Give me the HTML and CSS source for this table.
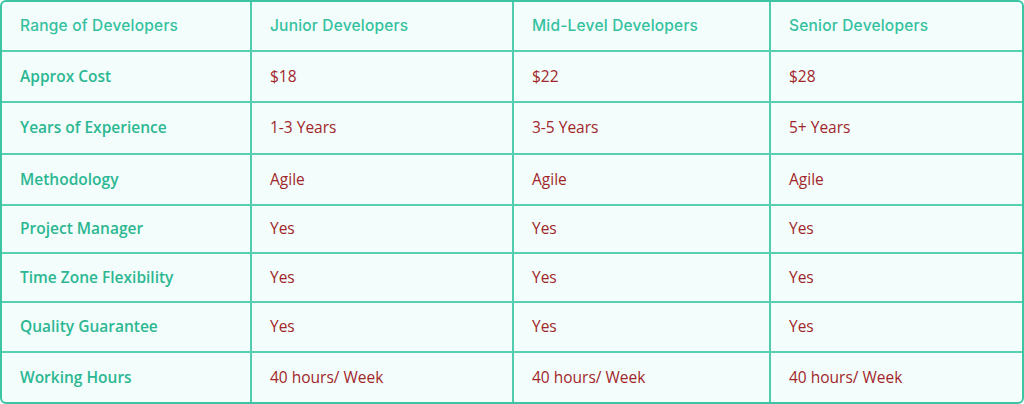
FILE: index.html
```html
<!DOCTYPE html>
<html>
<head>
<meta charset="utf-8">
<link rel="stylesheet" href="styles.css">
</head>
<body>
<div class="wrap">
<table class="grid">
<colgroup><col class="c1"><col class="c2"><col class="c3"><col class="c4"></colgroup>
<thead>
<tr class="r0"><th>Range of Developers</th><th>Junior Developers</th><th>Mid-Level Developers</th><th>Senior Developers</th></tr>
</thead>
<tbody>
<tr class="r1"><td class="lab">Approx Cost</td><td>$18</td><td>$22</td><td>$28</td></tr>
<tr class="r2"><td class="lab">Years of Experience</td><td>1-3 Years</td><td>3-5 Years</td><td>5+ Years</td></tr>
<tr class="r3"><td class="lab">Methodology</td><td>Agile</td><td>Agile</td><td>Agile</td></tr>
<tr class="r4"><td class="lab">Project Manager</td><td>Yes</td><td>Yes</td><td>Yes</td></tr>
<tr class="r5"><td class="lab">Time Zone Flexibility</td><td>Yes</td><td>Yes</td><td>Yes</td></tr>
<tr class="r6"><td class="lab">Quality Guarantee</td><td>Yes</td><td>Yes</td><td>Yes</td></tr>
<tr class="r7"><td class="lab">Working Hours</td><td>40 hours/ Week</td><td>40 hours/ Week</td><td>40 hours/ Week</td></tr>
</tbody>
</table>
</div>
</body>
</html>
```
FILE: styles.css
```css
html, body { margin: 0; padding: 0; background: #ffffff; }
.wrap {
  width: 1024px;
  height: 404px;
  box-sizing: border-box;
  border: 2px solid #3cc4a3;
  border-radius: 6px;
  overflow: hidden;
  background: #f3fefc;
}
.grid {
  width: 100%;
  border-collapse: collapse;
  table-layout: fixed;
  font-family: "Open Sans", "Noto Sans", sans-serif;
}
.c1 { width: 249px; }
.c2 { width: 262px; }
.c3 { width: 257px; }
.c4 { width: auto; }
th, td {
  box-sizing: border-box;
  padding: 0 0 2px 18px;
  text-align: left;
  vertical-align: middle;
  border-right: 2px solid #52ccae;
  border-bottom: 2px solid #58cfb1;
  white-space: nowrap;
}
th:last-child, td:last-child { border-right: none; }
tbody tr:last-child td { border-bottom: none; }
th {
  font-family: "Inter", "Open Sans", sans-serif;
  font-weight: 500;
  font-size: 15.5px;
  color: #35c1a0;
  letter-spacing: 0.2px;
}
td {
  font-size: 15.5px;
  color: #a1262a;
}
td.lab {
  color: #2cb792;
  font-weight: 600;
  font-size: 15.5px;
}
.r0 { height: 49px; }
.r1 { height: 51px; }
.r2 { height: 52px; }
.r3 { height: 51px; }
.r4 { height: 48px; }
.r5 { height: 49px; }
.r6 { height: 50px; }
.r7 { height: 50px; }
```
